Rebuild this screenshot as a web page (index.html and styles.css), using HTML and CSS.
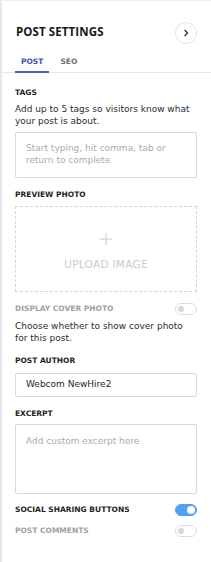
FILE: index.html
```html
<!DOCTYPE html>
<html>
<head>
<meta charset="utf-8">
<link rel="stylesheet" href="styles.css">
</head>
<body>
<div class="panel">
  <div class="header">
    <h1 class="title">POST SETTINGS</h1>
    <button class="circle-btn" aria-label="Close">
      <svg width="8" height="8" viewBox="0 0 8 8"><path d="M3 1.5 L5.5 4 L3 6.5" fill="none" stroke="#2b2f36" stroke-width="1.4" stroke-linecap="round" stroke-linejoin="round"/></svg>
    </button>
  </div>
  <div class="tabs">
    <div class="tab active">POST</div>
    <div class="tab">SEO</div>
  </div>
  <div class="content">
    <div class="label label-tags">TAGS</div>
    <p class="desc desc-tags">Add up to 5 tags so visitors know what your post is about.</p>
    <div class="field tags-field"><span class="placeholder">Start typing, hit comma, tab or return to complete</span></div>

    <div class="label label-photo">PREVIEW PHOTO</div>
    <div class="upload">
      <svg class="plus" width="12" height="12" viewBox="0 0 12 12"><path d="M6 0 V12 M0 6 H12" stroke="#c8c8c8" stroke-width="1"/></svg>
      <span class="upload-text">UPLOAD IMAGE</span>
    </div>

    <div class="row row-cover">
      <span class="label muted">DISPLAY COVER PHOTO</span>
      <span class="toggle"><span class="knob"></span></span>
    </div>
    <p class="desc desc-cover">Choose whether to show cover photo for this post.</p>

    <div class="label label-author">POST AUTHOR</div>
    <div class="field author-field">Webcom NewHire2</div>

    <div class="label label-excerpt">EXCERPT</div>
    <div class="field excerpt-field"><span class="placeholder">Add custom excerpt here</span></div>

    <div class="row row-social">
      <span class="label">SOCIAL SHARING BUTTONS</span>
      <span class="toggle on"><span class="knob"></span></span>
    </div>
    <div class="row row-comments">
      <span class="label muted">POST COMMENTS</span>
      <span class="toggle"><span class="knob"></span></span>
    </div>
  </div>
</div>
</body>
</html>
```

FILE: styles.css
```css
* { box-sizing: border-box; }
html, body { margin: 0; padding: 0; background: #ffffff; }
body {
  font-family: "DejaVu Sans", "Liberation Sans", sans-serif;
  color: #1f2328;
}
.panel {
  width: 211px;
  height: 562px;
  border-top: 1px solid #eceef1;
  border-left: 2px solid #e6e8ec;
  display: flex;
  flex-direction: column;
}
.header {
  display: flex;
  align-items: center;
  justify-content: space-between;
  padding: 21px 14px 0 14px;
  height: 43px;
}
.title {
  margin: 0;
  font-family: "Open Sans", "DejaVu Sans", sans-serif;
  font-size: 11.5px;
  line-height: 14px;
  font-weight: bold;
  color: #15181c;
  letter-spacing: 0.1px;
  position: relative;
  top: -1px;
}
.circle-btn {
  width: 22px;
  height: 22px;
  border-radius: 50%;
  border: 1px solid #e3e4e7;
  background: #fff;
  padding: 0;
  display: flex;
  align-items: center;
  justify-content: center;
}
.tabs {
  display: flex;
  margin-top: 11px;
  padding-left: 13px;
  border-bottom: 1px solid #e8e9ec;
}
.tab {
  font-size: 7.5px;
  font-weight: bold;
  line-height: 10px;
  padding: 2px 6px 4px 6px;
  margin-bottom: -1px;
  color: #6b6f76;
  border-bottom: 2px solid transparent;
  margin-right: 5px;
}
.tab.active {
  color: #3f51b5;
  border-bottom-color: #4a5fc8;
}
.content {
  padding: 0 14px 0 13px;
  display: flex;
  flex-direction: column;
}
.label {
  font-size: 7.5px;
  font-weight: bold;
  line-height: 10px;
  color: #1c1f24;
}
.label.muted { color: #9da1a8; }
.desc {
  margin: 0;
  font-size: 9px;
  line-height: 11.5px;
  color: #2a2d33;
}
.field {
  border: 1px solid #d6d9de;
  border-radius: 2px;
  font-size: 9px;
  line-height: 11.5px;
}
.placeholder { color: #a8abb1; }
.label-tags { margin-top: 15px; }
.desc-tags { margin-top: 6px; }
.tags-field {
  margin-top: 5px;
  height: 46px;
  padding: 10px 10px;
}
.label-photo { margin-top: 12px; }
.upload {
  margin-top: 6px;
  height: 86px;
  border: 1px dashed #d3d5d9;
  display: flex;
  flex-direction: column;
  align-items: center;
  padding-top: 26px;
}
.upload-text {
  margin-top: 13px;
  font-size: 10.5px;
  line-height: 12px;
  color: #c9cbcf;
  letter-spacing: 0.3px;
}
.row {
  display: flex;
  justify-content: space-between;
  align-items: center;
  height: 12px;
}
.row-cover { margin-top: 11px; }
.desc-cover { margin-top: 6px; }
.label-author { margin-top: 12px; }
.author-field {
  margin-top: 7px;
  height: 24px;
  padding: 5px 10px;
  color: #1c1f24;
}
.label-excerpt { margin-top: 12px; }
.excerpt-field {
  margin-top: 5px;
  height: 70px;
  padding: 11px 10px;
}
.row-social { margin-top: 10px; }
.row-comments { margin-top: 9px; }
.toggle {
  width: 22px;
  height: 12px;
  border-radius: 6px;
  border: 1px solid #dadcdf;
  background: #fff;
  position: relative;
  flex: none;
}
.toggle .knob {
  position: absolute;
  top: 2px;
  left: 2px;
  width: 6px;
  height: 6px;
  border-radius: 50%;
  background: #d5d7da;
}
.toggle.on {
  background: #4ea1f3;
  border-color: #4ea1f3;
}
.toggle.on .knob {
  left: auto;
  right: 1px;
  top: 1px;
  width: 8px;
  height: 8px;
  background: #fff;
}
```
